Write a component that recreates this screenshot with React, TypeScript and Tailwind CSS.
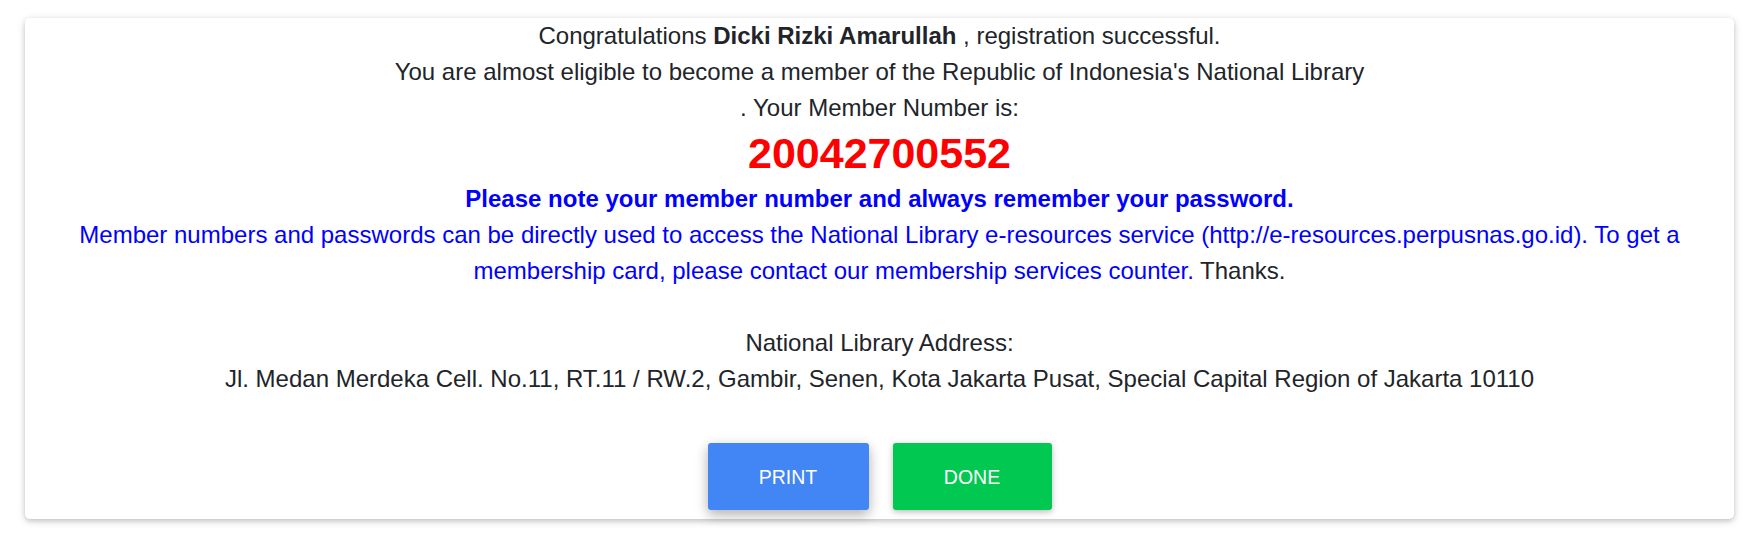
export default function App() {
  return (
    <div className="min-h-[547px] w-full bg-white pt-[18px] px-[25px] font-['Liberation_Sans',Arial,sans-serif]">
      <div className="w-[1709px] h-[501px] rounded-[5px] bg-white shadow-[0_2px_5px_0_rgba(0,0,0,0.16),0_2px_10px_0_rgba(0,0,0,0.12)] px-[40px] text-center text-[24px] leading-[36px] text-[#212529]">
        <p>
          Congratulations <b>Dicki Rizki Amarullah</b> , registration successful.
        </p>
        <p>
          You are almost eligible to become a member of the Republic of Indonesia's National Library
        </p>
        <p>. Your Member Number is:</p>
        <p className="text-[43px] leading-[55px] font-bold text-[#ff0000]">20042700552</p>
        <p className="font-bold text-[#0000ff]">Please note your member number and always remember your password.</p>
        <p>
          <span className="text-[#0000ff]">
            Member numbers and passwords can be directly used to access the National Library e-resources service
            (http://e-resources.perpusnas.go.id). To get a membership card, please contact our membership services
            counter.
          </span>{" "}
          Thanks.
        </p>
        <p className="mt-[36px]">National Library Address:</p>
        <p>Jl. Medan Merdeka Cell. No.11, RT.11 / RW.2, Gambir, Senen, Kota Jakarta Pusat, Special Capital Region of Jakarta 10110</p>
        <div className="mt-[46px] flex justify-center gap-[24px]">
          <button className="w-[161px] h-[67px] rounded-[3px] bg-[#4285f4] text-white text-[19.5px] uppercase shadow-[0_5px_11px_0_rgba(0,0,0,0.18),0_4px_15px_0_rgba(0,0,0,0.15)]">
            Print
          </button>
          <button className="w-[159px] h-[67px] rounded-[3px] bg-[#00c851] text-white text-[19.5px] uppercase shadow-[0_2px_5px_0_rgba(0,0,0,0.16),0_2px_10px_0_rgba(0,0,0,0.12)]">
            Done
          </button>
        </div>
      </div>
    </div>
  );
}
